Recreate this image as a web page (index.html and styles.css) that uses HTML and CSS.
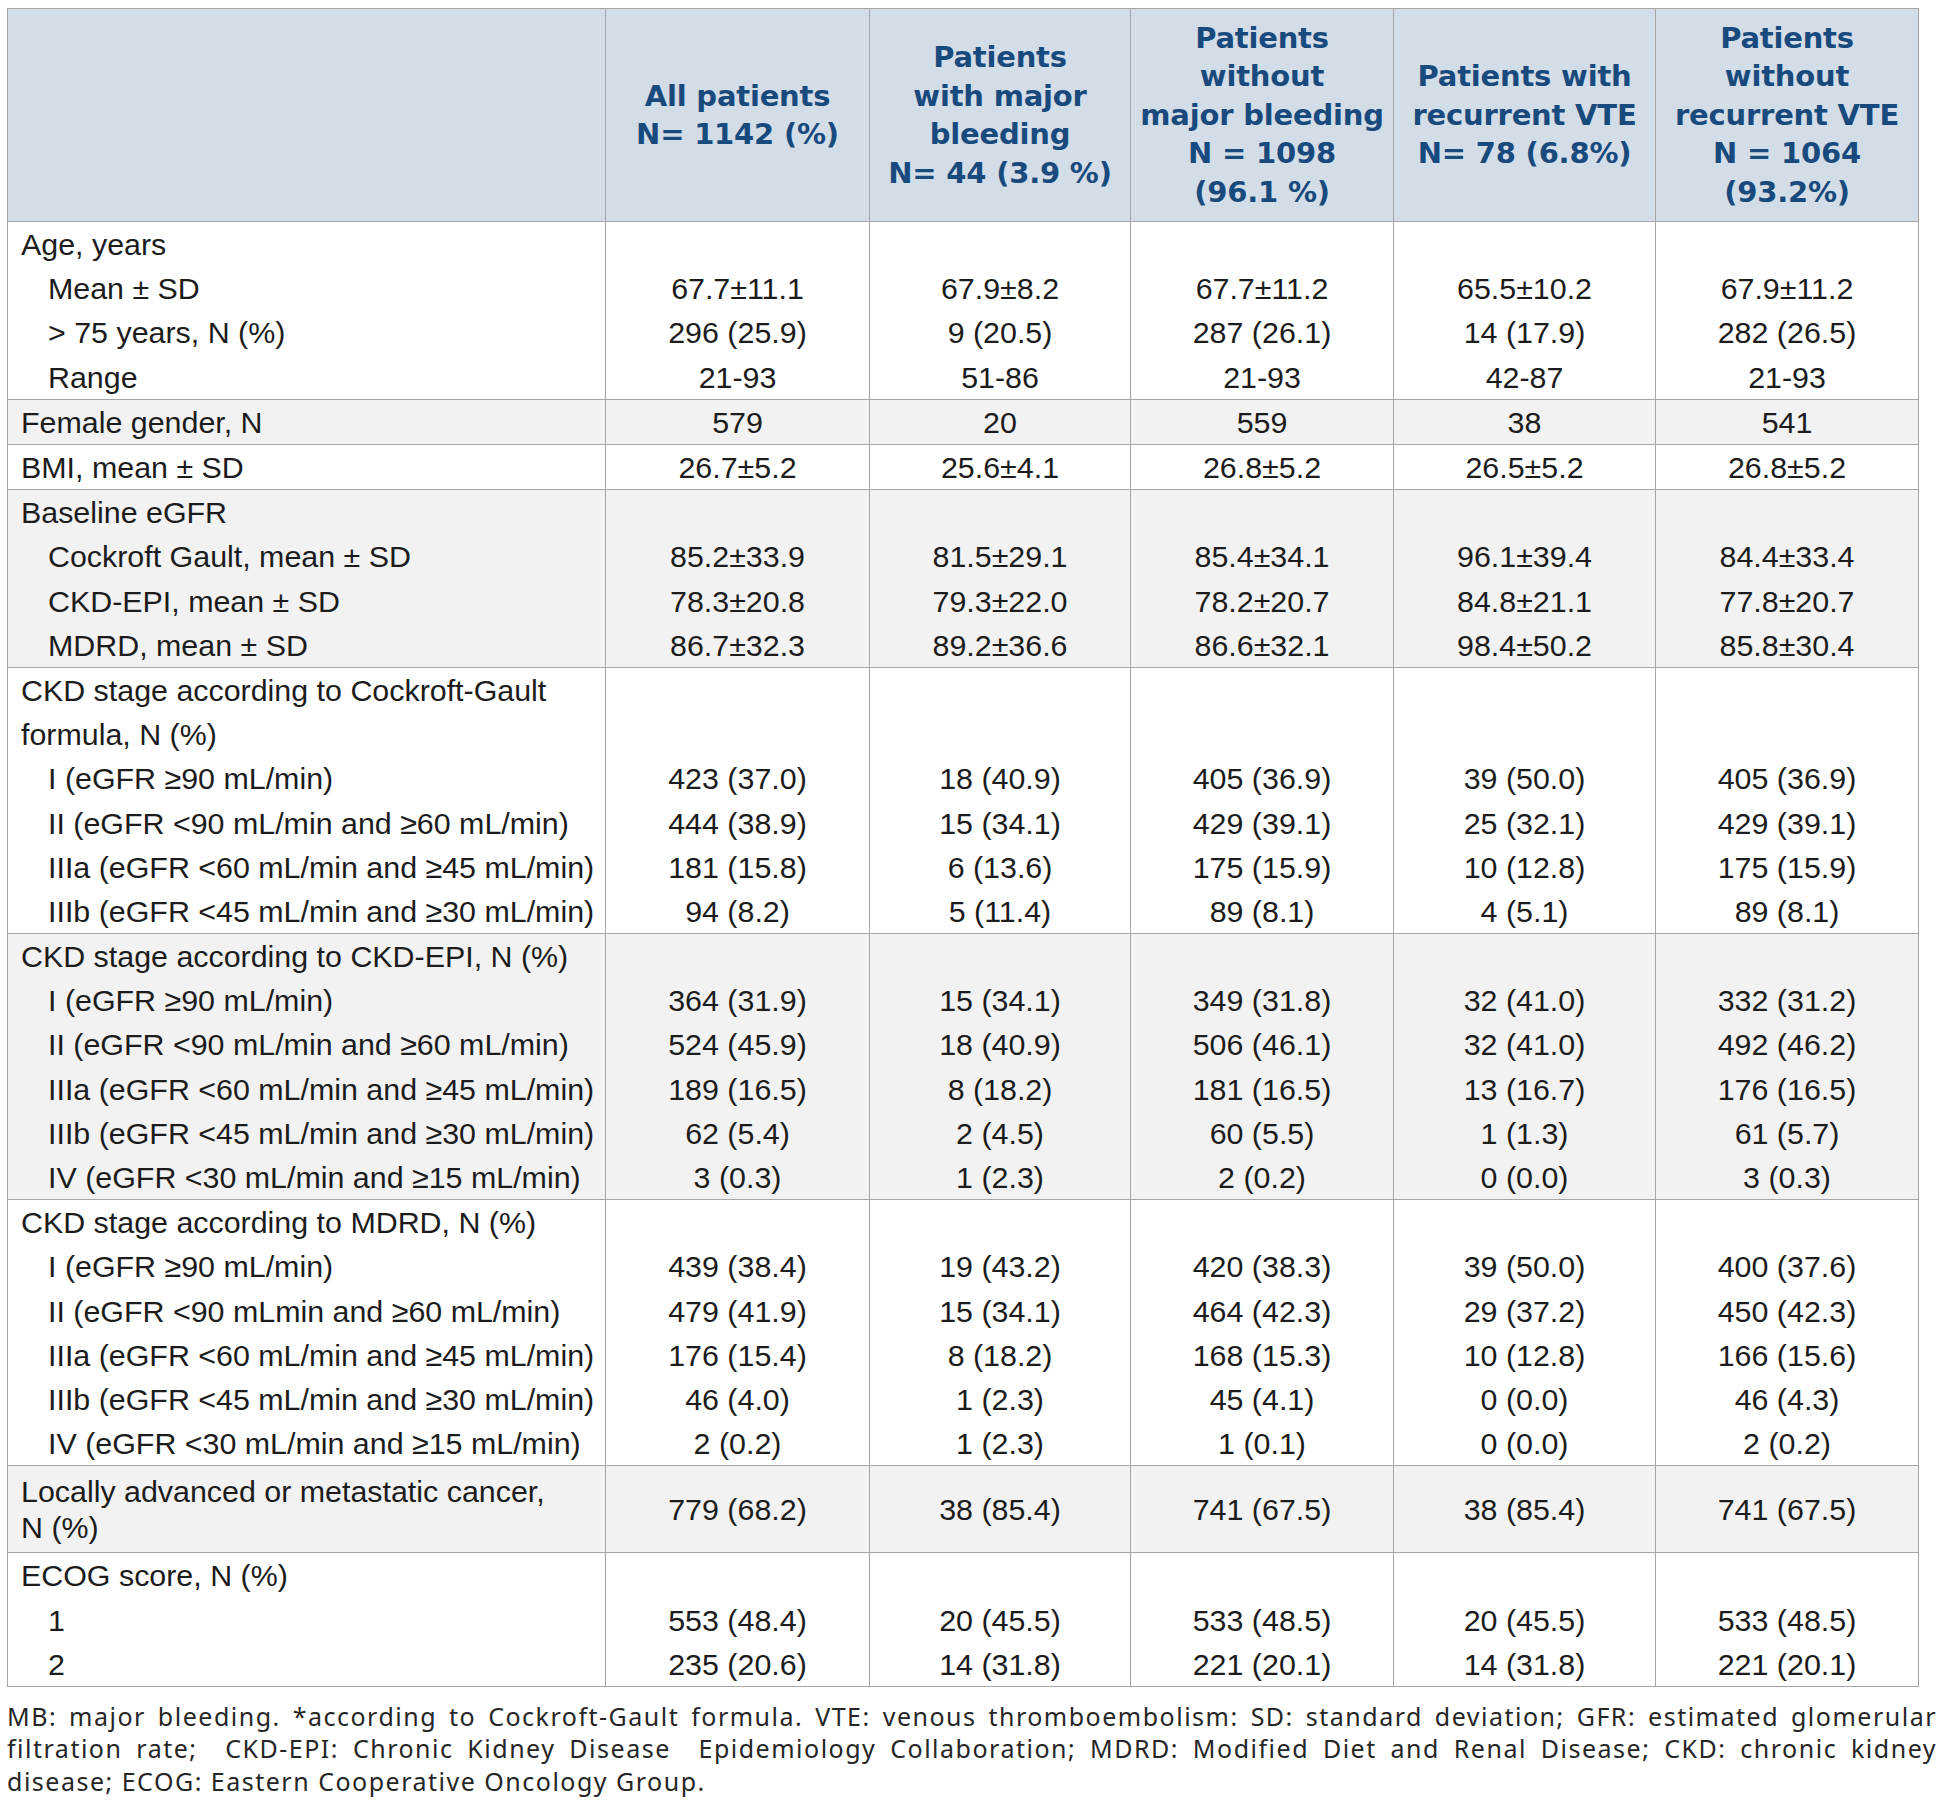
FILE: index.html
```html
<!DOCTYPE html>
<html lang="en">
<head>
<meta charset="utf-8">
<title>Baseline characteristics</title>
<link rel="stylesheet" href="styles.css">
</head>
<body>
<div class="page">
<table class="data">
  <colgroup>
    <col class="c-label">
    <col class="c1"><col class="c2"><col class="c3"><col class="c4"><col class="c5">
  </colgroup>
  <thead>
    <tr>
      <th></th>
      <th>All patients<br>N= 1142 (%)</th>
      <th>Patients<br>with major<br>bleeding<br>N= 44 (3.9 %)</th>
      <th>Patients<br>without<br>major bleeding<br>N = 1098<br>(96.1 %)</th>
      <th>Patients with<br>recurrent VTE<br>N= 78 (6.8%)</th>
      <th>Patients<br>without<br>recurrent VTE<br>N = 1064<br>(93.2%)</th>
    </tr>
  </thead>
  <tbody class="white">
    <tr><td class="t">Age, years</td><td></td><td></td><td></td><td></td><td></td></tr>
    <tr><td class="s">Mean ± SD</td><td>67.7±11.1</td><td>67.9±8.2</td><td>67.7±11.2</td><td>65.5±10.2</td><td>67.9±11.2</td></tr>
    <tr><td class="s">&gt; 75 years, N (%)</td><td>296 (25.9)</td><td>9 (20.5)</td><td>287 (26.1)</td><td>14 (17.9)</td><td>282 (26.5)</td></tr>
    <tr><td class="s">Range</td><td>21-93</td><td>51-86</td><td>21-93</td><td>42-87</td><td>21-93</td></tr>
  </tbody>
  <tbody class="grey">
    <tr><td class="t">Female gender, N</td><td>579</td><td>20</td><td>559</td><td>38</td><td>541</td></tr>
  </tbody>
  <tbody class="white">
    <tr><td class="t">BMI, mean ± SD</td><td>26.7±5.2</td><td>25.6±4.1</td><td>26.8±5.2</td><td>26.5±5.2</td><td>26.8±5.2</td></tr>
  </tbody>
  <tbody class="grey">
    <tr><td class="t">Baseline eGFR</td><td></td><td></td><td></td><td></td><td></td></tr>
    <tr><td class="s">Cockroft Gault, mean ± SD</td><td>85.2±33.9</td><td>81.5±29.1</td><td>85.4±34.1</td><td>96.1±39.4</td><td>84.4±33.4</td></tr>
    <tr><td class="s">CKD-EPI, mean ± SD</td><td>78.3±20.8</td><td>79.3±22.0</td><td>78.2±20.7</td><td>84.8±21.1</td><td>77.8±20.7</td></tr>
    <tr><td class="s">MDRD, mean ± SD</td><td>86.7±32.3</td><td>89.2±36.6</td><td>86.6±32.1</td><td>98.4±50.2</td><td>85.8±30.4</td></tr>
  </tbody>
  <tbody class="white">
    <tr><td class="t">CKD stage according to Cockroft-Gault</td><td></td><td></td><td></td><td></td><td></td></tr>
    <tr><td class="t">formula, N (%)</td><td></td><td></td><td></td><td></td><td></td></tr>
    <tr><td class="s">I (eGFR ≥90 mL/min)</td><td>423 (37.0)</td><td>18 (40.9)</td><td>405 (36.9)</td><td>39 (50.0)</td><td>405 (36.9)</td></tr>
    <tr><td class="s">II (eGFR &lt;90 mL/min and ≥60 mL/min)</td><td>444 (38.9)</td><td>15 (34.1)</td><td>429 (39.1)</td><td>25 (32.1)</td><td>429 (39.1)</td></tr>
    <tr><td class="s">IIIa (eGFR &lt;60 mL/min and ≥45 mL/min)</td><td>181 (15.8)</td><td>6 (13.6)</td><td>175 (15.9)</td><td>10 (12.8)</td><td>175 (15.9)</td></tr>
    <tr><td class="s">IIIb (eGFR &lt;45 mL/min and ≥30 mL/min)</td><td>94 (8.2)</td><td>5 (11.4)</td><td>89 (8.1)</td><td>4 (5.1)</td><td>89 (8.1)</td></tr>
  </tbody>
  <tbody class="grey">
    <tr><td class="t">CKD stage according to CKD-EPI, N (%)</td><td></td><td></td><td></td><td></td><td></td></tr>
    <tr><td class="s">I (eGFR ≥90 mL/min)</td><td>364 (31.9)</td><td>15 (34.1)</td><td>349 (31.8)</td><td>32 (41.0)</td><td>332 (31.2)</td></tr>
    <tr><td class="s">II (eGFR &lt;90 mL/min and ≥60 mL/min)</td><td>524 (45.9)</td><td>18 (40.9)</td><td>506 (46.1)</td><td>32 (41.0)</td><td>492 (46.2)</td></tr>
    <tr><td class="s">IIIa (eGFR &lt;60 mL/min and ≥45 mL/min)</td><td>189 (16.5)</td><td>8 (18.2)</td><td>181 (16.5)</td><td>13 (16.7)</td><td>176 (16.5)</td></tr>
    <tr><td class="s">IIIb (eGFR &lt;45 mL/min and ≥30 mL/min)</td><td>62 (5.4)</td><td>2 (4.5)</td><td>60 (5.5)</td><td>1 (1.3)</td><td>61 (5.7)</td></tr>
    <tr><td class="s">IV (eGFR &lt;30 mL/min and ≥15 mL/min)</td><td>3 (0.3)</td><td>1 (2.3)</td><td>2 (0.2)</td><td>0 (0.0)</td><td>3 (0.3)</td></tr>
  </tbody>
  <tbody class="white">
    <tr><td class="t">CKD stage according to MDRD, N (%)</td><td></td><td></td><td></td><td></td><td></td></tr>
    <tr><td class="s">I (eGFR ≥90 mL/min)</td><td>439 (38.4)</td><td>19 (43.2)</td><td>420 (38.3)</td><td>39 (50.0)</td><td>400 (37.6)</td></tr>
    <tr><td class="s">II (eGFR &lt;90 mLmin and ≥60 mL/min)</td><td>479 (41.9)</td><td>15 (34.1)</td><td>464 (42.3)</td><td>29 (37.2)</td><td>450 (42.3)</td></tr>
    <tr><td class="s">IIIa (eGFR &lt;60 mL/min and ≥45 mL/min)</td><td>176 (15.4)</td><td>8 (18.2)</td><td>168 (15.3)</td><td>10 (12.8)</td><td>166 (15.6)</td></tr>
    <tr><td class="s">IIIb (eGFR &lt;45 mL/min and ≥30 mL/min)</td><td>46 (4.0)</td><td>1 (2.3)</td><td>45 (4.1)</td><td>0 (0.0)</td><td>46 (4.3)</td></tr>
    <tr><td class="s">IV (eGFR &lt;30 mL/min and ≥15 mL/min)</td><td>2 (0.2)</td><td>1 (2.3)</td><td>1 (0.1)</td><td>0 (0.0)</td><td>2 (0.2)</td></tr>
  </tbody>
  <tbody class="grey">
    <tr class="tall"><td class="t">Locally advanced or metastatic cancer,<br>N (%)</td><td>779 (68.2)</td><td>38 (85.4)</td><td>741 (67.5)</td><td>38 (85.4)</td><td>741 (67.5)</td></tr>
  </tbody>
  <tbody class="white">
    <tr><td class="t">ECOG score, N (%)</td><td></td><td></td><td></td><td></td><td></td></tr>
    <tr><td class="s">1</td><td>553 (48.4)</td><td>20 (45.5)</td><td>533 (48.5)</td><td>20 (45.5)</td><td>533 (48.5)</td></tr>
    <tr><td class="s">2</td><td>235 (20.6)</td><td>14 (31.8)</td><td>221 (20.1)</td><td>14 (31.8)</td><td>221 (20.1)</td></tr>
  </tbody>
</table>
<p class="note">
  <span class="ln just">MB: major bleeding. *according to Cockroft-Gault formula. VTE: venous thromboembolism: SD: standard deviation; GFR: estimated glomerular</span>
  <span class="ln just">filtration rate;&nbsp; CKD-EPI: Chronic Kidney Disease&nbsp; Epidemiology Collaboration; MDRD: Modified Diet and Renal Disease; CKD: chronic kidney</span>
  <span class="ln">disease; ECOG: Eastern Cooperative Oncology Group.</span>
</p>
</div>
</body>
</html>
```
FILE: styles.css
```css
html, body {
  margin: 0;
  padding: 0;
  background: #ffffff;
}

.page {
  padding: 8px 0 0 7px;
}

.data {
  width: 1912px;
  table-layout: fixed;
  border-collapse: collapse;
  font-family: "Liberation Sans", Arial, sans-serif;
  font-size: 30.4px;
  color: #1c1c1c;
}

.c-label { width: 598px; }
.c1 { width: 264px; }
.c2 { width: 261px; }
.c3 { width: 263px; }
.c4 { width: 262px; }
.c5 { width: 263px; }

.data th,
.data td {
  border-left: 1px solid #a6a6a6;
  border-right: 1px solid #a6a6a6;
  padding: 0;
}

.data thead th {
  height: 212px;
  background: #d3dde7;
  color: #184a7d;
  font-family: "DejaVu Sans", Verdana, sans-serif;
  font-weight: bold;
  font-size: 29px;
  line-height: 38.5px;
  letter-spacing: -0.2px;
  text-align: center;
  vertical-align: middle;
  white-space: nowrap;
  border-top: 1px solid #a6a6a6;
  border-bottom: 1px solid #a6a6a6;
}

.data tbody {
  border-top: 1px solid #a6a6a6;
  border-bottom: 1px solid #a6a6a6;
}

.data tbody.grey td { background: #f2f2f2; }
.data tbody.white td { background: #ffffff; }

.data td {
  height: 44.2px;
  line-height: 34px;
  text-align: center;
  vertical-align: middle;
  white-space: nowrap;
}

.data td.t {
  text-align: left;
  padding-left: 13px;
}

.data td.s {
  text-align: left;
  padding-left: 40px;
}

.data tr.tall td {
  height: 86px;
  line-height: 36px;
}

.note {
  width: 1930px;
  margin: 13px 0 0 0;
  font-family: "Noto Sans", "DejaVu Sans", sans-serif;
  font-size: 25px;
  line-height: 32.5px;
  letter-spacing: 1.5px;
  color: #262626;
}

.note .ln {
  display: block;
  text-align: left;
}

.note .ln.just {
  text-align: justify;
  text-align-last: justify;
}
```
